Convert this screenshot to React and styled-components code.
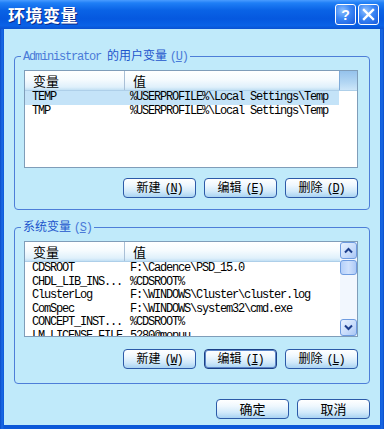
import React from 'react';
import styled, { createGlobalStyle } from 'styled-components';

const GlobalStyle = createGlobalStyle`
    html, body {
        margin: 0;
        padding: 0;
    }
    body {
        width: 384px;
        height: 429px;
        overflow: hidden;
        background: #0a58d6;
    }
`;

const Window = styled.div`
    width: 384px;
    height: 429px;
    display: flex;
    flex-direction: column;
    background: linear-gradient(90deg, #0a4cc8 0, #1a6ae6 2px, #0c58d8 4px, #0c58d8 380px, #1a6ae6 382px, #0a4cc8 384px);
    font-family: "Liberation Mono", "Noto Sans CJK SC", monospace;
`;

const TitleBar = styled.div`
    height: 29px;
    flex: none;
    display: flex;
    align-items: center;
    padding: 0 5px 0 8px;
    box-sizing: border-box;
    background: linear-gradient(180deg, #4a9cff 0%, #1f7ff6 10%, #0a63e6 35%, #0558df 65%, #0a62e6 88%, #0a52d2 100%);
`;

const Title = styled.div`
    flex: 1;
    color: #fff;
    font: bold 17px "Noto Sans CJK SC", sans-serif;
    letter-spacing: 0.5px;
    text-shadow: 1px 1px 0 #0c2a86;
`;

const CapButton = styled.div`
    width: 21px;
    height: 21px;
    box-sizing: border-box;
    border: 1px solid #ffffff;
    border-radius: 3px;
    background: radial-gradient(circle at 35% 30%, #8fc0ff 0%, #3a86f5 45%, #1759dc 100%);
    display: flex;
    align-items: center;
    justify-content: center;
    color: #fff;
    font: bold 14px "Liberation Sans", sans-serif;
    & + & {
        margin-left: 2px;
    }
`;

const Body = styled.div`
    flex: 1;
    margin: 0 4px 4px;
    background: #c0eafa;
    padding: 18px 10px 0;
    display: flex;
    flex-direction: column;
`;

const Group = styled.fieldset`
    margin: ${p => p.$mt}px 0 0;
    min-width: 0;
    border: 1px solid #4d7ed8;
    border-radius: 4px;
    padding: 5px 11px ${p => p.$pb}px 9px;
`;

const Legend = styled.legend`
    padding: 0 2px;
    margin-left: -3px;
    font: 12px/16px "Noto Sans CJK SC", sans-serif;
    color: #1d55cc;
`;

const Latin = styled.span`
    font-family: "Liberation Mono", monospace;
    font-size: 12px;
    letter-spacing: -1.2px;
    color: #4a7ad8;
`;

const ListBox = styled.div`
    height: ${p => p.$h}px;
    box-sizing: border-box;
    border: 1px solid #7f9db9;
    background: #fff;
    display: flex;
    overflow: hidden;
`;

const ListMain = styled.div`
    flex: 1;
    min-width: 0;
    display: flex;
    flex-direction: column;
`;

const Header = styled.div`
    display: grid;
    grid-template-columns: 99px 1fr ${p => (p.$filler ? '18px' : '')};
    height: 20px;
    flex: none;
    box-sizing: border-box;
    background: linear-gradient(180deg, #ffffff 0%, #f6fbfe 45%, #dff0fb 85%, #c3e0f4 100%);
    border-bottom: 1px solid #aecfe9;
`;

const HeadCell = styled.div`
    font: 13px/19px "Noto Sans CJK SC", sans-serif;
    color: #000;
    padding-left: 8px;
    border-left: ${p => (p.$sep ? '1px solid #a9bfd6' : 'none')};
`;

const HeadFiller = styled.div`
    border-left: 1px solid #7eaad8;
    background: linear-gradient(180deg, #95c2ec 0%, #b2d6f3 60%, #cde6f9 100%);
`;

const Rows = styled.div`
    margin-right: ${p => p.$gutter || 0}px;
`;

const Row = styled.div`
    display: grid;
    grid-template-columns: 99px 1fr;
    height: 13.5px;
    line-height: 13.5px;
    background: ${p => (p.$sel ? '#c4e3f8' : 'transparent')};
    font-size: 12px;
    letter-spacing: -1.2px;
    color: #000;
    white-space: nowrap;
    overflow: hidden;
`;

const Cell = styled.div`
    padding-left: ${p => p.$pl}px;
    overflow: hidden;
`;

const ScrollBar = styled.div`
    width: 17px;
    flex: none;
    display: flex;
    flex-direction: column;
    background: #f2f7fe;
`;

const ScrollBtn = styled.div`
    height: 17px;
    flex: none;
    box-sizing: border-box;
    border: 1px solid #6e9be0;
    border-radius: 3px;
    background: linear-gradient(135deg, #eaf3ff 0%, #c6dbfb 60%, #a9c6f4 100%);
    display: flex;
    align-items: center;
    justify-content: center;
`;

const Thumb = styled.div`
    height: 15px;
    margin-top: 1px;
    box-sizing: border-box;
    border: 1px solid #6e9be0;
    border-radius: 3px;
    background: linear-gradient(90deg, #b5d0fa 0%, #cfe1fd 50%, #aecaf6 100%);
`;

const Track = styled.div`
    flex: 1;
`;

const ButtonRow = styled.div`
    display: flex;
    justify-content: flex-end;
    gap: 8px;
    margin-top: ${p => p.$mt}px;
`;

const Button = styled.div`
    width: 73px;
    height: 20px;
    box-sizing: border-box;
    border: 1px solid ${p => (p.$focus ? '#1b3f86' : '#2c5aa8')};
    border-radius: 4px;
    background: linear-gradient(180deg, #ffffff 0%, #eef7fe 35%, #d0e9fa 70%, #a9d3f2 100%);
    box-shadow: ${p => (p.$focus ? 'inset 0 0 0 1px #5c86c8' : 'none')};
    display: flex;
    align-items: center;
    justify-content: center;
    font: 13px/18px "Noto Sans CJK SC", sans-serif;
    color: #000;
    white-space: pre;
`;

const Key = styled.span`
    font-family: "Liberation Mono", monospace;
    font-size: 12px;
    letter-spacing: -1.2px;
    & u {
        text-underline-offset: 1px;
    }
`;

const KeyText = styled.span`
    font-family: "Noto Sans CJK SC", sans-serif;
    font-size: 12px;
    letter-spacing: 0;
    margin-right: 4px;
`;

const Chevron = ({ up }) => (
    <svg width="9" height="7" viewBox="0 0 9 7">
        <path d={up ? 'M1 5.5 L4.5 2 L8 5.5' : 'M1 1.5 L4.5 5 L8 1.5'} fill="none" stroke="#1d3e8c" strokeWidth="2" />
    </svg>
);

const Label = ({ text, k }) => (
    <Key>
        <KeyText>{text}</KeyText>
        (<u>{k}</u>)
    </Key>
);

const userVars = [
    ['TEMP', '%USERPROFILE%\\Local Settings\\Temp'],
    ['TMP', '%USERPROFILE%\\Local Settings\\Temp'],
];

const sysVars = [
    ['CDSROOT', 'F:\\Cadence\\PSD_15.0'],
    ['CHDL_LIB_INS...', '%CDSROOT%'],
    ['ClusterLog', 'F:\\WINDOWS\\Cluster\\cluster.log'],
    ['ComSpec', 'F:\\WINDOWS\\system32\\cmd.exe'],
    ['CONCEPT_INST...', '%CDSROOT%'],
    ['LM_LICENSE_FILE', '5280@mopuu'],
];

const VarRows = ({ items, selected, gutter }) => (
    <Rows $gutter={gutter}>
        {items.map(([name, value], i) => (
            <Row key={name} $sel={i === selected}>
                <Cell $pl={7}>{name}</Cell>
                <Cell $pl={6}>{value}</Cell>
            </Row>
        ))}
    </Rows>
);

export default function App() {
    return (
        <>
            <GlobalStyle />
            <Window>
                <TitleBar>
                    <Title>环境变量</Title>
                    <CapButton>?</CapButton>
                    <CapButton>
                        <svg width="13" height="13" viewBox="0 0 13 13">
                            <path d="M2 2 L11 11 M11 2 L2 11" stroke="#fff" strokeWidth="2.4" strokeLinecap="square" />
                        </svg>
                    </CapButton>
                </TitleBar>
                <Body>
                    <Group $mt={0} $pb={11}>
                        <Legend>
                            <Latin>Administrator </Latin>的用户变量 <Latin>(<u>U</u>)</Latin>
                        </Legend>
                        <ListBox $h={98}>
                            <ListMain>
                                <Header $filler>
                                    <HeadCell>变量</HeadCell>
                                    <HeadCell $sep>值</HeadCell>
                                    <HeadFiller />
                                </Header>
                                <VarRows items={userVars} selected={0} gutter={18} />
                            </ListMain>
                        </ListBox>
                        <ButtonRow $mt={10}>
                            <Button><Label text="新建" k="N" /></Button>
                            <Button><Label text="编辑" k="E" /></Button>
                            <Button><Label text="删除" k="D" /></Button>
                        </ButtonRow>
                    </Group>
                    <Group $mt={8} $pb={14}>
                        <Legend>
                            系统变量 <Latin>(<u>S</u>)</Latin>
                        </Legend>
                        <ListBox $h={96}>
                            <ListMain>
                                <Header>
                                    <HeadCell>变量</HeadCell>
                                    <HeadCell $sep>值</HeadCell>
                                </Header>
                                <VarRows items={sysVars} selected={-1} />
                            </ListMain>
                            <ScrollBar>
                                <ScrollBtn><Chevron up /></ScrollBtn>
                                <Thumb />
                                <Track />
                                <ScrollBtn><Chevron /></ScrollBtn>
                            </ScrollBar>
                        </ListBox>
                        <ButtonRow $mt={12}>
                            <Button><Label text="新建" k="W" /></Button>
                            <Button $focus><Label text="编辑" k="I" /></Button>
                            <Button><Label text="删除" k="L" /></Button>
                        </ButtonRow>
                    </Group>
                    <ButtonRow $mt={15}>
                        <Button>确定</Button>
                        <Button>取消</Button>
                    </ButtonRow>
                </Body>
            </Window>
        </>
    );
}
